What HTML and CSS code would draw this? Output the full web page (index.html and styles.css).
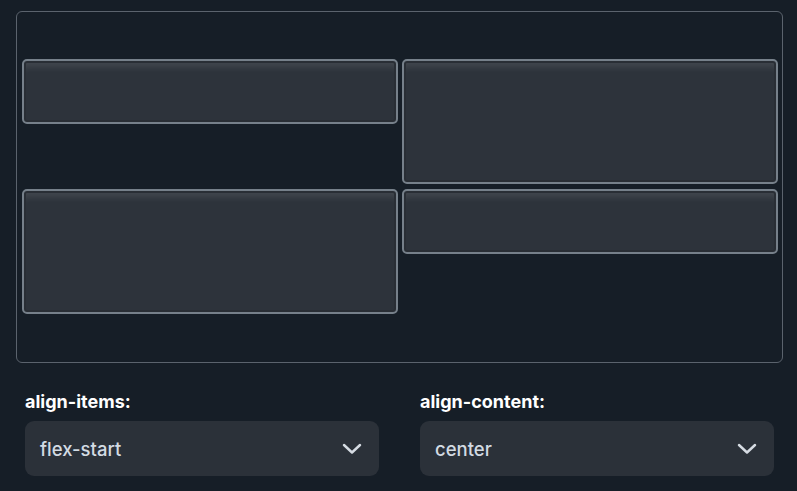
FILE: index.html
```html
<!DOCTYPE html>
<html>
<head>
<meta charset="utf-8">
<link rel="stylesheet" href="styles.css">
</head>
<body>
<div class="page">
  <div class="stage">
    <div class="item short"></div>
    <div class="item tall"></div>
    <div class="item tall"></div>
    <div class="item short"></div>
  </div>
  <div class="controls">
    <div class="control">
      <label class="label">align-items:</label>
      <div class="select">
        <span class="value">flex-start</span>
        <svg class="chev" width="20" height="11" viewBox="0 0 20 11"><path d="M2 2 L10 9.5 L18 2" fill="none" stroke="#d6dce3" stroke-width="2.4" stroke-linecap="round" stroke-linejoin="round"/></svg>
      </div>
    </div>
    <div class="control">
      <label class="label">align-content:</label>
      <div class="select">
        <span class="value">center</span>
        <svg class="chev" width="20" height="11" viewBox="0 0 20 11"><path d="M2 2 L10 9.5 L18 2" fill="none" stroke="#d6dce3" stroke-width="2.4" stroke-linecap="round" stroke-linejoin="round"/></svg>
      </div>
    </div>
  </div>
</div>
</body>
</html>
```
FILE: styles.css
```css
html, body {
  margin: 0;
  padding: 0;
  background: #161e27;
}
body {
  font-family: Inter, "Noto Sans", sans-serif;
  width: 797px;
  height: 491px;
  overflow: hidden;
}
.page {
  padding: 11px 15px 0 16px;
}
.stage {
  box-sizing: border-box;
  width: 767px;
  height: 352px;
  border: 1px solid #5b636d;
  border-radius: 6px;
  padding: 0 4px 1px 5px;
  display: flex;
  flex-wrap: wrap;
  align-content: center;
  align-items: flex-start;
  column-gap: 4px;
  row-gap: 5px;
}
.item {
  box-sizing: border-box;
  width: 376px;
  border: 2px solid #76808a;
  border-radius: 5px;
  background: #2d333b;
  box-shadow: inset 0 0 0 2px #292e35, inset 0 11px 7px -5px rgba(255,255,255,0.1);
}
.item.short { height: 65px; }
.item.tall { height: 125px; }
.controls {
  display: flex;
  gap: 41px;
  padding: 28px 0 0 9px;
}
.control {
  width: 354px;
  display: flex;
  flex-direction: column;
  gap: 8px;
}
.label {
  color: #ffffff;
  font-weight: 700;
  font-size: 18px;
  line-height: 22px;
}
.select {
  height: 55px;
  box-sizing: border-box;
  background: #2b3139;
  border-radius: 9px;
  display: flex;
  align-items: center;
  justify-content: space-between;
  padding: 0 17px 0 15px;
}
.value {
  color: #d3dbe3;
  font-size: 18.5px;
  font-weight: 500;
}
.chev { display: block; }
```
